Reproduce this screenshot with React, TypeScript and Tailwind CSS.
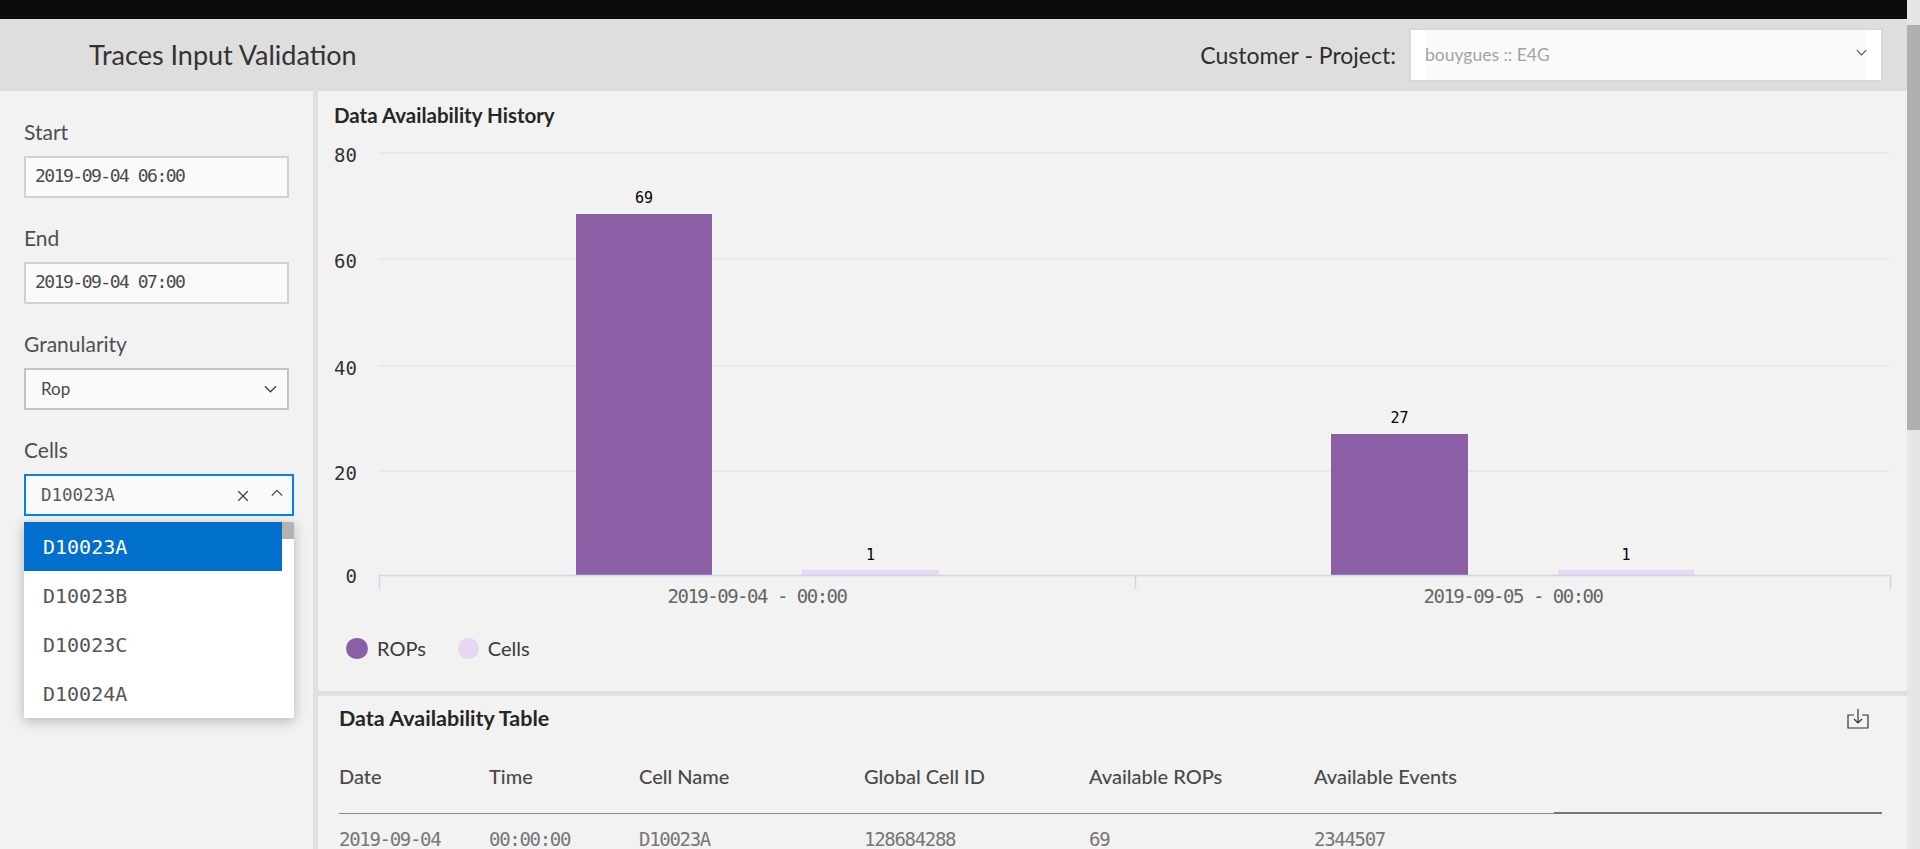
const MONO = "font-['DejaVu_Sans_Mono',monospace]";

function Chevron({ up = false, className = '' }: { up?: boolean; className?: string }) {
  return (
    <svg viewBox="0 0 14 8" fill="none" stroke="currentColor" strokeWidth="1.4" className={className}>
      <path d={up ? 'M1 7l6-6 6 6' : 'M1 1l6 6 6-6'} />
    </svg>
  );
}

function FieldLabel({ children }: { children: string }) {
  return <div className="mb-[10px] h-6 text-[21px] leading-[20px] text-[#4f4f4f]">{children}</div>;
}

function DateField({ label, value }: { label: string; value: string }) {
  return (
    <div className="mb-[30px]">
      <FieldLabel>{label}</FieldLabel>
      <div className={`flex h-[42px] w-[265px] items-center border-2 border-[#d2d2d2] bg-[#fafafa] pb-[3px] pl-[9px] text-[18px] tracking-[-1.5px] text-[#4a4a4a] ${MONO}`}>
        {value}
      </div>
    </div>
  );
}

function CellsDropdown() {
  const items = ['D10023A', 'D10023B', 'D10023C', 'D10024A'];
  return (
    <div className="absolute left-0 top-[48px] z-10 w-[270px] bg-white shadow-[0_3px_12px_rgba(0,0,0,0.25)]">
      <div className="absolute right-0 top-0 h-[17px] w-3 bg-[#b3b3b3]" />
      {items.map((item, i) => (
        <div
          key={item}
          className={`flex h-[49px] w-[258px] items-center pl-[19px] text-[20px] ${MONO} ${i === 0 ? 'bg-[#0070cc] text-white' : 'text-[#555555]'}`}
        >
          {item}
        </div>
      ))}
    </div>
  );
}

function Sidebar() {
  return (
    <aside className="w-[318px] shrink-0 border-r-[5px] border-[#e0e0e0] pl-6 pt-[31px]">
      <DateField label="Start" value="2019-09-04 06:00" />
      <DateField label="End" value="2019-09-04 07:00" />
      <div className="mb-[30px]">
        <FieldLabel>Granularity</FieldLabel>
        <div className="flex h-[42px] w-[265px] items-center justify-between border-2 border-[#c4c4c4] bg-[#fafafa] pl-[15px] pr-[10px] text-[17px] text-[#4a4a4a]">
          Rop
          <Chevron className="h-2 w-[13px] text-[#444444]" />
        </div>
      </div>
      <div>
        <FieldLabel>Cells</FieldLabel>
        <div className="relative">
          <div className={`flex h-[42px] w-[270px] items-center border-2 border-[#0082f0] bg-[#fafafa] pl-[15px] pr-[9px] text-[17.5px] text-[#5a5a5a] ${MONO}`}>
            <span className="flex-1">D10023A</span>
            <svg viewBox="0 0 10 10" fill="none" stroke="#444444" strokeWidth="1.3" className="mr-[23px] mt-[2px] h-[10px] w-[10px]">
              <path d="M0 0l10 10M10 0L0 10" />
            </svg>
            <Chevron up className="mb-1 h-2 w-3 text-[#444444]" />
          </div>
          <CellsDropdown />
        </div>
      </div>
    </aside>
  );
}

// chart origin on the page is (334, 127)
function AvailabilityChart() {
  const grid = [
    { label: '80', y: 26 },
    { label: '60', y: 132 },
    { label: '40', y: 239 },
    { label: '20', y: 344 },
  ];
  const baseY = 448;
  const bars = [
    { x: 242, w: 136, top: 87, fill: '#8b5fa6', value: '69', vy: 76 },
    { x: 468, w: 137, top: 443, fill: '#e8d6f2', value: '1', vy: 433 },
    { x: 997, w: 137, top: 307, fill: '#8b5fa6', value: '27', vy: 296 },
    { x: 1224, w: 136, top: 443, fill: '#e8d6f2', value: '1', vy: 433 },
  ];
  return (
    <svg width="1573" height="509" viewBox="0 0 1573 509" className="block" fontFamily="DejaVu Sans Mono, monospace">
      {grid.map((g) => (
        <g key={g.label}>
          <line x1="45" x2="1556" y1={g.y} y2={g.y} stroke="#e6e6e6" strokeWidth="1.5" />
          <text x="23" y={g.y + 9} textAnchor="end" fontSize="19" fill="#333333">{g.label}</text>
        </g>
      ))}
      <text x="23" y={baseY + 8} textAnchor="end" fontSize="19" fill="#333333">0</text>
      {bars.map((b) => (
        <g key={b.x}>
          <rect x={b.x} y={b.top} width={b.w} height={baseY - b.top} fill={b.fill} />
          <text x={b.x + b.w / 2} y={b.vy} textAnchor="middle" fontSize="15" fill="#000000">{b.value}</text>
        </g>
      ))}
      <path d="M45 448.500h1512M45.500 448v14M801.500 448v14M1556.500 448v14" stroke="#cbd8ec" strokeWidth="1.5" fill="none" />
      <text x="423" y="476" textAnchor="middle" fontSize="19" letterSpacing="-1.5" fill="#666666">2019-09-04 - 00:00</text>
      <text x="1179" y="476" textAnchor="middle" fontSize="19" letterSpacing="-1.5" fill="#666666">2019-09-05 - 00:00</text>
    </svg>
  );
}

export default function App() {
  return (
    <div className="flex h-screen w-full overflow-hidden bg-[#e8e8e8] font-['Lato',sans-serif]">
      <div className="flex min-w-0 flex-1 flex-col">
        <div className="h-[19px] shrink-0 bg-[#0b0b0b]" />
        <header className="flex h-[72px] shrink-0 items-center justify-between bg-[#dedede] pl-[89px] pr-[24px]">
          <h1 className="text-[27px] font-normal text-[#333333]">Traces Input Validation</h1>
          <div className="flex items-center gap-[13px]">
            <span className="text-[23px] text-[#2e2e2e]">Customer - Project:</span>
            <div className="flex h-[54px] w-[474px] border-2 border-[#d8d8d8] bg-white px-[14px]">
              <div className="flex flex-1 items-center justify-between bg-[#fafafa] text-[17.5px] text-[#a3a3a3]">
                bouygues :: E4G
                <Chevron className="mb-[6px] h-[7px] w-[11px] text-[#555555]" />
              </div>
            </div>
          </div>
        </header>
        <div className="flex min-h-0 flex-1 bg-[#f2f2f2]">
          <Sidebar />
          <main className="flex min-w-0 flex-1 flex-col">
            <section className="h-[605px] shrink-0 border-b-[5px] border-[#e0e0e0] pl-4 pt-[12px]">
              <h2 className="h-6 text-[20.5px] font-bold leading-6 text-[#262626]">Data Availability History</h2>
              <AvailabilityChart />
              <div className="flex items-center pl-3 text-[20px] leading-6 text-[#3a3a3a]">
                <span className="mr-[9px] h-[21px] w-[22px] rounded-full bg-[#8b5fa6]" />
                <span className="mr-[32px]">ROPs</span>
                <span className="mr-[9px] h-[21px] w-[21px] rounded-full bg-[#e8d6f2]" />
                <span>Cells</span>
              </div>
            </section>
            <section className="flex-1 pl-[21px] pr-[25px]">
              <div className="flex h-[45px] items-center justify-between pr-[13px]">
                <h2 className="text-[21.5px] font-bold text-[#262626]">Data Availability Table</h2>
                <svg viewBox="0 0 22 20" fill="none" stroke="#333333" strokeWidth="1.2" className="h-5 w-[22px]">
                  <path d="M11 0v14M7 10l4 4 4-4M7 6H1v13h20V6h-6" />
                </svg>
              </div>
              <div className="flex h-[73px]">
                <div className="grid w-[1215px] grid-cols-[150px_150px_225px_225px_225px_1fr] items-center border-b border-[#888888] pb-[3px] text-[20px] font-medium text-[#4a4a4a]">
                  <span>Date</span>
                  <span>Time</span>
                  <span>Cell Name</span>
                  <span>Global Cell ID</span>
                  <span>Available ROPs</span>
                  <span>Available Events</span>
                </div>
                <div className="flex-1 border-b-2 border-[#777777]" />
              </div>
              <div className={`grid grid-cols-[150px_150px_225px_225px_225px_1fr] pt-[11px] text-[19px] tracking-[-1.3px] text-[#777777] ${MONO}`}>
                <span>2019-09-04</span>
                <span>00:00:00</span>
                <span>D10023A</span>
                <span>128684288</span>
                <span>69</span>
                <span>2344507</span>
              </div>
            </section>
          </main>
        </div>
      </div>
      <div className="w-[13px] shrink-0 bg-[#e6e6e6] pt-[25px]">
        <div className="h-[405px] bg-[#b0b0b0]" />
      </div>
    </div>
  );
}
